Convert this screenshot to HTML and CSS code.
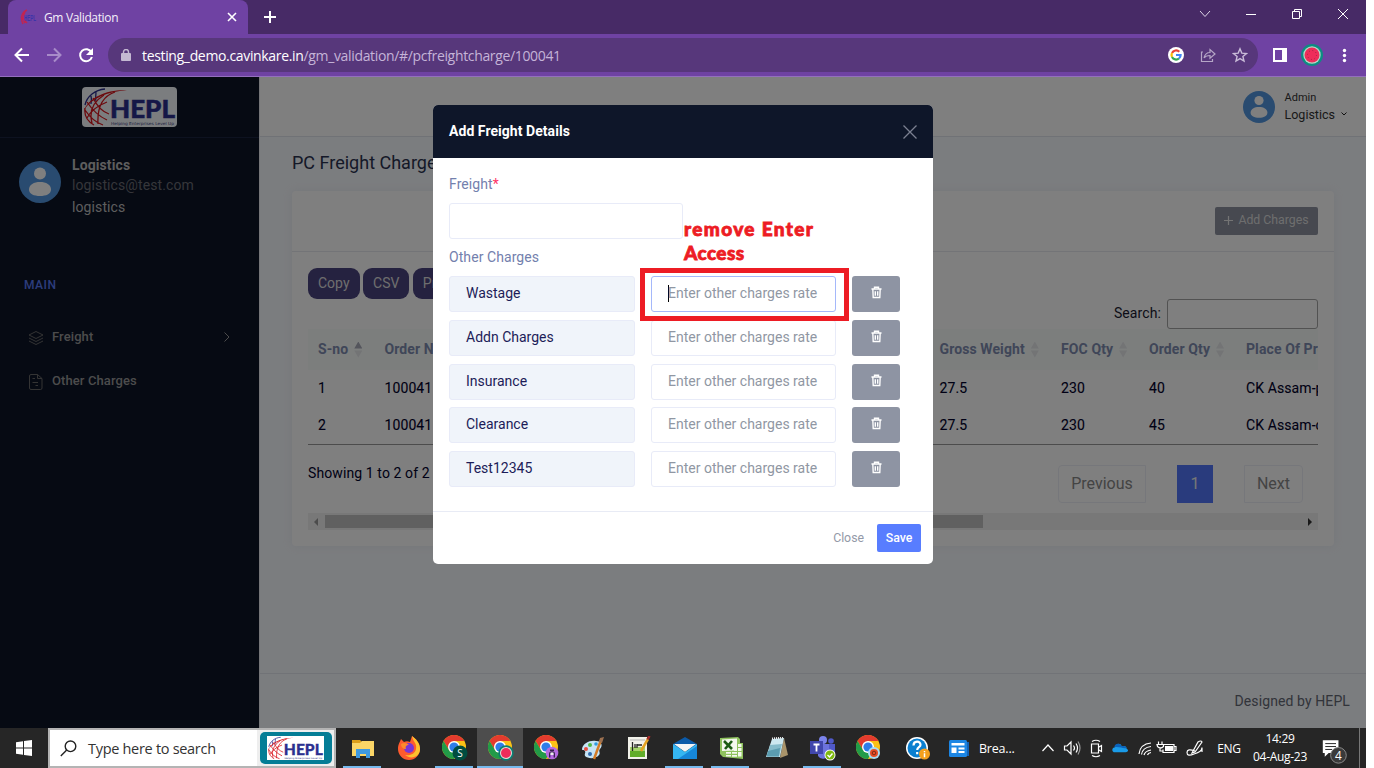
FILE: index.html
```
<!DOCTYPE html>
<html lang="en">
<head>
<meta charset="utf-8">
<title>Gm Validation</title>
<link rel="stylesheet" href="styles.css">
</head>
<body>
<svg class="defs" width="0" height="0">
  <symbol id="globe" viewBox="0 0 46 38">
    <g fill="none" stroke-width="1.300">
      <path stroke="#2b2f8f" d="M2 17C4 8 12 2 22 1M8 8c1 4 0 6 0 8M13 4c0 4-1 7 0 9"/>
      <path stroke="#d8141c" d="M2 20c-1 7 2 13 9 17M32 4C20 8 14 18 15 36M21 7C10 14 6 24 9 35M4 14c4 6 11 14 20 18M10 10c4 8 10 14 16 16M2 22c4 6 9 12 18 15M24 14C14 18 7 24 4 30"/>
      <path fill="#d8141c" stroke="none" d="M44 2C26 2 8 7 1 22 9 10 24 4 44 2z"/>
    </g>
  </symbol>
  <symbol id="avatar" viewBox="0 0 42 42">
    <circle cx="21" cy="21" r="21" fill="#5397e0"/><circle cx="21" cy="12.500" r="6" fill="#fff"/>
    <path fill="#fff" d="M10 28.500c0-5 5-7.500 11-7.500s11 2.500 11 7.500c0 4.500-5 6.500-11 6.500s-11-2-11-6.500z"/>
  </symbol>
  <symbol id="trash" viewBox="0 0 12 14">
    <path fill="none" stroke="#fff" stroke-width="1.500" d="M.5 3.200h11M3.800 3V1.300h4.400V3M2 3.500l.4 9h7.200l.4-9M4.700 5.500v5M7.300 5.500v5"/>
  </symbol>
  <symbol id="chrome" viewBox="0 0 24 24">
    <circle cx="12" cy="12" r="12" fill="#fbc116"/>
    <path fill="#e33b2e" d="M1.600 6A12 12 0 0 1 22.400 6H12L7 15z"/>
    <path fill="#229b48" d="M1.600 6A12 12 0 0 0 12 24l5-9-5 3-5-3z"/>
    <circle cx="12" cy="12" r="6" fill="#fff"/><circle cx="12" cy="12" r="4.600" fill="#2f7de9"/>
  </symbol>
</svg>

<div class="screen">
  <div class="tabstrip">
    <div class="tab">
      <svg class="favicon" width="17" height="16" viewBox="0 0 17 16"><path d="M7 1C2 3 0 9 3 15M5 3c-2 3-2 8 0 11M1 8l6 6" fill="none" stroke="#c2244f" stroke-width="1.500"/><text x="4" y="12" class="fav-text" textLength="12" lengthAdjust="spacingAndGlyphs">HEPL</text></svg>
      <span class="tab-title">Gm Validation</span>
      <svg width="10" height="10" viewBox="0 0 10 10"><path d="M1 1l8 8M9 1L1 9" stroke="#fff" stroke-width="1.600"/></svg>
    </div>
    <svg class="newtab" width="12" height="12" viewBox="0 0 12 12"><path d="M6 0v12M0 6h12" stroke="#fff" stroke-width="2"/></svg>
    <div class="winctl">
      <svg width="46" height="28" viewBox="0 0 46 28"><path d="M18 11l5 5.500 5-5.500" fill="none" stroke="#ddd4e6"/></svg>
      <svg width="46" height="28" viewBox="0 0 46 28"><path d="M18 14.500h10" stroke="#fff"/></svg>
      <svg width="46" height="28" viewBox="0 0 46 28"><path d="M18.500 11.500h7v7h-7zM20.500 11V9.500h7v7H26" fill="none" stroke="#fff"/></svg>
      <svg width="46" height="28" viewBox="0 0 46 28"><path d="M18 9l10 10M28 9L18 19" stroke="#fff"/></svg>
    </div>
  </div>

  <div class="toolbar">
    <svg width="108" height="42" viewBox="0 0 108 42" fill="none" stroke="#fff" stroke-width="2">
      <path d="M29 21H16M22 14.500L15.500 21l6.500 6.500"/>
      <path stroke="#a88bc9" d="M47 21h13M54 14.500l6.500 6.500-6.500 6.500"/>
      <path d="M91.500 18.500a6 6 0 1 0 .4 4.500"/><path fill="#fff" stroke="none" d="M93 14v7h-7z"/>
    </svg>
    <div class="omnibox">
      <svg width="10" height="12" viewBox="0 0 10 12"><path fill="#c4b8d2" d="M1 4h8a1 1 0 0 1 1 1v6a1 1 0 0 1-1 1H1a1 1 0 0 1-1-1V5a1 1 0 0 1 1-1z"/><path d="M2.500 4.500V3a2.500 2.500 0 0 1 5 0v1.500" fill="none" stroke="#c4b8d2" stroke-width="1.400"/></svg>
      <span class="url">testing_demo.cavinkare.in<span>/gm_validation/#/pcfreightcharge/100041</span></span>
      <svg width="16" height="16" viewBox="0 0 16 16"><circle cx="8" cy="8" r="8" fill="#fff"/><g fill="none" stroke-width="2.200"><path stroke="#ea4335" d="M4 6a4.600 4.600 0 0 1 7.300-1.300"/><path stroke="#fbbc05" d="M4 10a4.600 4.600 0 0 1 0-4"/><path stroke="#34a853" d="M4 10a4.600 4.600 0 0 0 7 1.500"/><path stroke="#4285f4" d="M8 8h4.600a4.600 4.600 0 0 1-1.600 3.500"/></g></svg>
      <svg width="16" height="16" viewBox="0 0 16 16" fill="none" stroke="#b5a6c6" stroke-width="1.200"><path d="M3 5H1.500v9.500h11V12M4 11c1-4 3-5.500 6-5.500V2.500L15 7l-5 4.300V8.500C7.500 8.500 5.500 9 4 11z"/></svg>
      <svg width="16" height="16" viewBox="0 0 16 16" fill="none" stroke="#c9bcd8" stroke-width="1.400"><path d="M8 1.800l1.800 4.300 4.700.4-3.600 3 1.100 4.600-4-2.500-4 2.500 1.100-4.600-3.600-3 4.700-.4z"/></svg>
    </div>
    <svg class="bar-icons" width="100" height="42" viewBox="0 0 100 42">
      <path fill="#fff" fill-rule="evenodd" d="M7 14h14v14H7zM9 16v10h7V16z"/>
      <circle cx="46" cy="21" r="11" fill="#0c8d82"/><circle cx="46" cy="21" r="8.700" fill="#b8d8c8"/><circle cx="46" cy="21" r="7.500" fill="#ee2c5a"/><circle cx="46" cy="21" r="4.500" fill="none" stroke="#9c2543" stroke-dasharray="1 2.500"/>
      <g fill="#fff"><circle cx="78.500" cy="16.500" r="1.700"/><circle cx="78.500" cy="21.500" r="1.700"/><circle cx="78.500" cy="26.500" r="1.700"/></g>
    </svg>
  </div>

  <div class="app">
    <aside class="sidebar">
      <div class="brand"><svg class="logo" width="95" height="40" viewBox="0 0 95 40"><use href="#globe" x="1" y="1" width="46" height="38"/><text x="28" y="31" class="logo-name" textLength="65" lengthAdjust="spacingAndGlyphs">HEPL</text><text x="29" y="38" class="logo-tag" textLength="63" lengthAdjust="spacingAndGlyphs">Helping Enterprises Level Up</text></svg></div>
      <div class="profile">
        <svg width="42" height="42"><use href="#avatar"/></svg>
        <div class="who"><b>Logistics</b><span class="mail">logistics@test.com</span><span class="role">logistics</span></div>
      </div>
      <div class="nav-head">MAIN</div>
      <div class="nav">
        <svg width="16" height="16" viewBox="0 0 16 16" fill="none" stroke="#686868"><path d="M8 1.500l7 3.500-7 3.500L1 5zM1 8l7 3.500L15 8M1 11l7 3.500 7-3.500"/></svg>
        <span>Freight</span>
        <svg width="6" height="10" viewBox="0 0 6 10" fill="none" stroke="#999"><path d="M.5.500L5 5 .5 9.500"/></svg>
      </div>
      <div class="nav">
        <svg width="16" height="18" viewBox="0 0 16 18" fill="none" stroke="#686868"><path d="M9.500 1.500H3a1.500 1.500 0 0 0-1.500 1.500v12A1.500 1.500 0 0 0 3 16.500h9.500A1.500 1.500 0 0 0 14 15V5.500zM9.500 1.500v4H14M4.500 9.500H10M4.500 5.500H7M7.500 12.500H10"/></svg>
        <span>Other Charges</span>
      </div>
    </aside>

    <main class="main">
      <header class="topbar">
        <svg width="32" height="32"><use href="#avatar"/></svg>
        <div class="user"><small>Admin</small><span>Logistics <svg width="6" height="4" viewBox="0 0 6 4"><path d="M.5.500L3 3 5.500.500" fill="none" stroke="#222"/></svg></span></div>
      </header>
      <div class="content">
        <h1>PC Freight Charges</h1>
        <section class="card">
          <div class="card-head"><button class="add"><svg width="9" height="9" viewBox="0 0 9 9"><path d="M4.500 0v9M0 4.500h9" stroke="#e8e8e8" stroke-width="1.200"/></svg>Add Charges</button></div>
          <div class="exports"><button>Copy</button><button>CSV</button><button>Print</button></div>
          <div class="search"><label>Search:</label><input aria-label="Search"></div>
          <div class="table">
            <div class="row head"><span>S-no<i class="sort up"></i></span><span>Order No</span><span>Gross Weight<i class="sort"></i></span><span>FOC Qty<i class="sort"></i></span><span>Order Qty<i class="sort"></i></span><span>Place Of Production</span></div>
            <div class="row"><span>1</span><span>100041</span><span>27.5</span><span>230</span><span>40</span><span>CK Assam-p</span></div>
            <div class="row"><span>2</span><span>100041</span><span>27.5</span><span>230</span><span>45</span><span>CK Assam-c</span></div>
          </div>
          <div class="table-foot">
            <span class="info">Showing 1 to 2 of 2</span>
            <div class="pages"><span class="pg prev">Previous</span><span class="pg on">1</span><span class="pg next">Next</span></div>
          </div>
          <div class="scroll"><i class="arrow left"></i><div class="thumb"></div><i class="arrow right"></i></div>
        </section>
      </div>
      <footer class="footer">Designed by HEPL</footer>
    </main>

    <div class="backdrop"></div>
    <div class="modal">
      <div class="modal-head">Add Freight Details<svg width="14" height="14" viewBox="0 0 14 14"><path d="M.5.500l13 13M13.500.500l-13 13" stroke="#7b8091" stroke-width="1.300"/></svg></div>
      <div class="modal-body">
        <label>Freight<em>*</em></label>
        <div class="field freight"></div>
        <label>Other Charges</label>
        <div class="charges">
          <div class="field name">Wastage</div><div class="field rate focus">Enter other charges rate</div><button class="del"><svg width="11" height="13"><use href="#trash"/></svg></button>
          <div class="field name">Addn Charges</div><div class="field rate">Enter other charges rate</div><button class="del"><svg width="11" height="13"><use href="#trash"/></svg></button>
          <div class="field name">Insurance</div><div class="field rate">Enter other charges rate</div><button class="del"><svg width="11" height="13"><use href="#trash"/></svg></button>
          <div class="field name">Clearance</div><div class="field rate">Enter other charges rate</div><button class="del"><svg width="11" height="13"><use href="#trash"/></svg></button>
          <div class="field name">Test12345</div><div class="field rate">Enter other charges rate</div><button class="del"><svg width="11" height="13"><use href="#trash"/></svg></button>
        </div>
      </div>
      <div class="modal-foot"><span>Close</span><button>Save</button></div>
      <div class="note">remove Enter<br><span>Access</span></div>
      <div class="note-box"></div>
    </div>
  </div>

  <div class="taskbar">
    <div class="start"><svg width="16" height="16" viewBox="0 0 16 16" fill="#fff"><path d="M0 2.300l7-1v6.200H0zM8 1.100L16 0v7.500H8zM0 8.500h7v6.200l-7-1zM8 8.500h8V16l-8-1.100z"/></svg></div>
    <div class="tsearch">
      <svg width="17" height="17" viewBox="0 0 17 17" fill="none" stroke="#222" stroke-width="1.400"><circle cx="10.500" cy="6.300" r="5.300"/><path d="M6.700 10L.8 16"/></svg>
      <span>Type here to search</span>
      <div class="chipwrap"><div class="chip"><svg width="57" height="24" viewBox="0 0 95 40"><use href="#globe" x="1" y="1" width="46" height="38"/><text x="28" y="31" class="logo-name" textLength="65" lengthAdjust="spacingAndGlyphs">HEPL</text><text x="29" y="38" class="logo-tag" textLength="63" lengthAdjust="spacingAndGlyphs">Helping Enterprises Level Up</text></svg></div></div>
    </div>
    <div class="task run"><svg width="22" height="19" viewBox="0 0 22 19"><path fill="#dda01b" d="M0 1h8l2 2v4H0z"/><path fill="#fbd667" d="M0 4h8l2-2h12v15H0z"/><path fill="#3f9ae0" d="M4 10h14v9h-4v-4H8v4H4z"/></svg></div>
    <div class="task"><svg width="24" height="24" viewBox="0 0 24 24"><path fill="#ff5b2e" d="M1 13C1 8 3 6 4 3l3 3c2-1 4-1 6 0l2-6c4 3 8 7 8 13a11 11 0 0 1-22 0z"/><path fill="#ffc22e" d="M15 0c1 6 5 7 4 13-1 5-6 7-11 6 6 5 15 2 15-6 0-6-4-10-8-13z"/><circle cx="12" cy="12" r="5" fill="#7b35d4"/><path fill="#ff8a2a" d="M4 8c3-2 6-1 8 1-3 0-4 2-3 4-3 0-5-2-5-5z"/></svg></div>
    <div class="task run"><svg width="26" height="26" viewBox="0 0 26 26"><use href="#chrome" width="24" height="24"/><circle cx="18" cy="18" r="7.500" fill="#004d40"/><text x="18" y="21.500" class="badge-s">S</text></svg></div>
    <div class="task run active"><svg width="26" height="26" viewBox="0 0 26 26"><use href="#chrome" width="24" height="24"/><circle cx="18" cy="18" r="7.700" fill="#0c7d72"/><circle cx="18" cy="18" r="6" fill="#e8e0d8"/><circle cx="18" cy="18" r="5" fill="#ee2c5a"/></svg></div>
    <div class="task"><svg width="26" height="26" viewBox="0 0 26 26"><use href="#chrome" width="24" height="24"/><circle cx="18" cy="18" r="6.300" fill="#b56ae0"/><path d="M15.700 22.500v-3.500a2.300 2 0 0 1 4.600 0v3.500" stroke="#32204a" fill="none" stroke-width="1.300"/><path fill="#32204a" d="M16 14.500h4v1.500h-4z"/><path fill="#eee" d="M16.500 17.500h3V20h-3z"/></svg></div>
    <div class="task"><svg width="24" height="23" viewBox="0 0 24 23"><path fill="#c6e4f5" d="M1 12C2 6 9 3 15 4c6 0 7 5 4 8-2 2 1 4-1 6-3 4-11 4-14 1-1-2 1-3 0-5s-3 0-3-2z"/><circle cx="5" cy="12" r="2" fill="#e84c3d"/><circle cx="9" cy="8" r="2" fill="#52b947"/><circle cx="15" cy="7" r="1.800" fill="#2e9be0"/><circle cx="9" cy="17" r="2" fill="#306cb0"/><path d="M20 3l-7 19" stroke="#d37b25" stroke-width="2.500"/><path fill="#9d7150" d="M19 1l4-1-2 6-3-1z"/></svg></div>
    <div class="task"><svg width="24" height="24" viewBox="0 0 24 24"><path fill="#f2f2ea" d="M1 1h19v22H1z"/><path fill="#61ad29" d="M3 14h15v7H3z"/><path fill="#a6d56b" d="M3 11h15v4H3z"/><path d="M3 4h15" stroke="#b4b4b4"/><path d="M5.500 6v9M8 8v4M10 9h5M10 8v4" stroke="#222" stroke-width="1.300" fill="none"/><path d="M21 3l-7 12" stroke="#e5a321" stroke-width="2.500"/><path d="M22.500 0l-2 3.500" stroke="#a12a2a" stroke-width="2.500"/></svg></div>
    <div class="task run"><svg width="24" height="22" viewBox="0 0 24 22"><path fill="#0b5aa8" d="M0 7l12-7 12 7v5H0z"/><path fill="#f4f4f4" d="M1 7h22l-11 8z"/><path fill="#35b6f2" d="M0 7l12 8L24 7v15H0z"/><path fill="#1687d9" d="M24 9L5 22h19z"/></svg></div>
    <div class="task run"><svg width="24" height="22" viewBox="0 0 24 22"><path fill="#8fc25e" d="M1 1l18-1 2 2v4h3v16l-20-2-3-3z"/><path fill="#f4f8ee" d="M3 2.500l15-1v12L3 14z"/><path d="M5 4l8 8M13 4l-7 8" stroke="#1d5c14" stroke-width="2.600"/><path fill="#f4f8ee" d="M15 7h3v3h-3zM19 7h3.500v3H19zM15 11h3v3h-3zM19 11h3.500v3H19zM19 15h3.500v4.500H19zM13 15h5v1.800h-5zM7 15h5v1.800H7zM7 18h5v1.500H7zM13 18h5v1.800h-5z"/></svg></div>
    <div class="task"><svg width="24" height="22" viewBox="0 0 24 22"><path fill="#a9946b" d="M19 1l4 17-8 3z"/><path fill="#cde8f0" d="M7 2l12-1-4 19H1z"/><path fill="#86bccb" d="M5 8l12-1-3 12.500H2z"/><path fill="#5b9cb0" d="M3 14l12-3-1 8.500H1.500z"/><path d="M7 1.500l12-1" stroke="#eee" stroke-dasharray="1 1" stroke-width="2"/></svg></div>
    <div class="task run"><svg width="26" height="26" viewBox="0 0 26 26"><circle cx="13" cy="5" r="4" fill="#7b83eb"/><circle cx="21" cy="6" r="2.800" fill="#5059c9"/><path fill="#5059c9" d="M16 9h9v7a5 5 0 0 1-7 4z"/><path fill="#6c72dd" d="M8 9h11v9a6 6 0 0 1-11 3z"/><path fill="#4147ad" d="M0 6h13v13H0z"/><path d="M3.500 9.500h6M6.500 9.500v7" stroke="#fff" stroke-width="1.800"/><circle cx="20" cy="20" r="5.500" fill="#fff"/><circle cx="20" cy="20" r="4.600" fill="#7fb910"/><path d="M17.500 20l2 2 3-3.500" fill="none" stroke="#fff" stroke-width="1.400"/></svg></div>
    <div class="task"><svg width="26" height="26" viewBox="0 0 26 26"><use href="#chrome" width="24" height="24"/><circle cx="18" cy="18" r="6" fill="#a9dcf2"/><circle cx="18" cy="18" r="4" fill="#e84d24"/><circle cx="18" cy="18" r="1.800" fill="none" stroke="#7c2d1a"/></svg></div>
    <div class="task help"><svg width="24" height="24" viewBox="0 0 24 24"><circle cx="11" cy="12" r="11" fill="#fff"/><circle cx="11" cy="12" r="9.500" fill="#0a7fd0"/><path d="M7.500 9.500c0-5 7-5 7-.8 0 2.500-3.300 2.500-3.300 5.300M11.200 16v2.200" fill="none" stroke="#fff" stroke-width="2.200"/><circle cx="18.500" cy="18" r="5.500" fill="#f5a01d"/><path d="M18.500 15v1.300M18.500 17.200v4" stroke="#fff" stroke-width="1.500"/></svg></div>
    <div class="news"><svg width="20" height="17" viewBox="0 0 20 17"><path fill="#1261b5" d="M3 2h17v14H3z"/><rect width="18" height="17" rx="1.500" fill="#1c86e4"/><path fill="#fff" d="M2.500 3h13v2.500h-13zM2.500 7.500h5v5.500h-5zM9.500 7.500h6v2h-6zM9.500 11h6v2h-6z"/></svg><span>Brea...</span></div>
    <div class="tray">
      <svg width="176" height="40" viewBox="0 0 176 40" fill="none" stroke="#fff" stroke-width="1.200">
        <path d="M6.500 23l5.500-6 5.500 6"/>
        <path d="M28.500 18h2.500l4-4v12l-4-4h-2.500zM37.500 17.500q2 2.500 0 5M40 15.500q3 4.500 0 9"/><path stroke="#999" d="M42 13.500q4 6.500 0 13"/>
        <path d="M55.500 16h7v9h-7zM63 19l2.500-1.500v6L63 22M56 13.500q4-2.500 8 0M56 27.500q4 2.500 8 0"/>
        <g transform="translate(13.500 3) scale(.82 .85)" stroke="none"><path fill="#1a9be8" d="M80 25c-5 0-4-6 0-6 1-5 7-5 8-1 4-1 6 0 6 3 3 1 2 4-1 4z"/><path fill="#0b62ba" d="M79 19c1-5 7-5 9-1 3-1 5 0 6 2-5 1-8-2-15-1z"/></g>
        <path d="M103 26q1-10 12-11M105.500 26.500q1-7 9.500-8M108 27q1-4 7-5M111.500 27q.5-2 3.500-2.500"/>
        <path d="M127 16.500h11v8h-11v-3M138.500 18.500h1.500v4h-1.500M122.500 13.500v3M126 13.500v3M121 16.500h6.500v2q-3 3-6 0zM124 20v3h3"/><path fill="#fff" stroke="none" d="M129 18h8v5h-8z"/>
        <path d="M156 25l6-11q3-2 4 0l-7 10zM159 23q-8-3-8 1.500t7 1.500q8-2 8-6.500M166 20v4"/>
      </svg>
      <span class="lang">ENG</span>
      <div class="clock"><span>14:29</span><span>04-Aug-23</span></div>
      <svg class="notif" width="46" height="40" viewBox="0 0 46 40"><path fill="#fff" d="M9 12h16v13H15l-4 4v-4H9z"/><path d="M11.500 15.500h11M11.500 18.500h11M11.500 21.500h7" stroke="#262626"/><circle cx="25" cy="27.500" r="8" fill="#3a3a3a" stroke="#8b8b8b"/><text x="25" y="32" class="badge-4">4</text></svg>
    </div>
  </div>
</div>
</body>
</html>
```
FILE: styles.css
```
* { box-sizing: border-box; }
body { margin: 0; background: #fff; font: 14px/21px Roboto, sans-serif; overflow: hidden; }
svg { display: block; flex: none; }
button { border: 0; font: inherit; }
.defs { position: absolute; }
.screen { width: 1366px; height: 768px; display: flex; flex-direction: column; }

.logo-name { font: 900 25px Lato, sans-serif; fill: #2b2f8f; stroke: #2b2f8f; stroke-width: .5px; }
.logo-tag { font: 4px "DejaVu Sans", sans-serif; fill: #35387f; }
.fav-text { font: bold 9px "Liberation Sans", sans-serif; fill: #3c35a8; }

.tabstrip { height: 34px; background: #472a66; display: flex; align-items: flex-start; padding-left: 8px; }
.tab { width: 240px; height: 34px; background: #6f42a3; border-radius: 8px 8px 0 0; display: flex; align-items: center; padding: 0 11px 0 12px; color: #f5f0fa; }
.tab-title { flex: 1; margin-left: 7px; font: 12px "Open Sans", sans-serif; letter-spacing: -.35px; }
.newtab { margin: 11px 0 0 16px; }
.winctl { display: flex; margin-left: auto; }

.toolbar { height: 43px; background: #6f42a3; border-bottom: 1px solid #936fbd; display: flex; }
.omnibox { width: 1150px; height: 34px; margin-top: 4px; border-radius: 17px; background: #57377b; display: flex; align-items: center; padding: 0 10px 0 13px; gap: 16px; }
.bar-icons { margin-left: 8px; }
.url { flex: 1; color: #fff; font: 14px "Open Sans", sans-serif; letter-spacing: -.34px; margin-left: -5px; }
.url span { color: #c5b4d8; }

.app { position: relative; height: 651px; display: flex; background: #f7fafe; overflow: hidden; }
.sidebar { flex: none; width: 259px; background: #0c1427; }
.brand { height: 61px; border-bottom: 1px solid #1a2440; display: flex; justify-content: center; padding-top: 10px; }
.logo { background: #f7fbff; border-radius: 4px; }
.profile { display: flex; padding: 17px 19px 0; gap: 11px; height: 137px; }
.profile > svg { margin-top: 6px; }
.who { display: flex; flex-direction: column; color: #bcbcbc; letter-spacing: .1px; }
.who .mail { color: #6b6d75; margin-top: -1px; }
.who .role { margin-top: 1px; }
.nav-head { color: #5a7bf8; font-weight: 500; font-size: 12px; letter-spacing: .5px; padding-left: 24px; line-height: 20px; }
.nav { display: flex; align-items: center; height: 20px; margin: 32px 29px 0 28px; gap: 8px; color: #999; font-size: 13px; font-weight: 500; letter-spacing: .1px; }
.nav + .nav { margin-top: 24px; }
.nav > svg:first-child { margin-top: 2px; }
.nav span { flex: 1; margin-top: -2px; }

.main { flex: 1; min-width: 0; display: flex; flex-direction: column; border-left: 1px solid #e8ebf1; }
.topbar { height: 60px; background: #fff; border-bottom: 1px solid #e0e4ec; display: flex; align-items: center; justify-content: flex-end; padding-right: 19px; gap: 10px; color: #333; }
.user { display: flex; flex-direction: column; font-size: 12.500px; line-height: 17px; margin-top: -2px; }
.user small { font-size: 11px; }
.user span { display: flex; align-items: center; gap: 6px; }
.content { flex: 1; padding: 15px 32px 0; }
h1 { margin: 0 0 17px; font: 18px/22px Roboto, sans-serif; color: #2a3350; }
.card { height: 355px; background: #fff; border-radius: 4px; box-shadow: 0 0 10px rgba(183,192,206,.2); }
.card-head { height: 61px; border-bottom: 1px solid #e6e8ee; display: flex; justify-content: flex-end; padding: 16px 16px 0; }
.add { width: 103px; height: 28px; background: #8e93a1; color: #ddd; border-radius: 2px; font-size: 12.300px; display: flex; align-items: center; justify-content: center; gap: 5px; padding: 0 0 2px; }
.exports { display: flex; gap: 3.500px; padding: 16px 16px 0; }
.exports button { height: 31px; padding: 0 10px; border-radius: 9px; background: #4b4480; color: #ddd; font-size: 14px; }
.search { display: flex; justify-content: flex-end; align-items: center; padding-right: 16px; gap: 6px; color: #1a1a30; }
.search input { width: 151px; height: 30px; border: 1px solid #a5a5a5; border-radius: 3px; background: #fff; }
.search label { letter-spacing: .1px; margin-top: -2px; }
.table { margin: 0 16px; border-bottom: 1px solid #999; overflow: hidden; color: #00002a; }
.row { display: grid; grid-template-columns: 66.500px 555px 121.500px 88px 97px 160px; padding-left: 10px; height: 37px; align-items: center; white-space: nowrap; letter-spacing: .1px; -webkit-text-stroke: .1px; }
.head { height: 41px; background: #f8fcfb; color: #7f8cb0; font-weight: 700; -webkit-text-stroke: 0; }
.row span { display: flex; align-items: center; }
.sort { width: 8px; height: 16px; margin-left: 6px; background: linear-gradient(#e6e8eb,#e6e8eb); clip-path: polygon(50% 0,100% 43%,0 43%,0 57%,100% 57%,50% 100%,0 57%,0 43%); }
.sort.up { background: linear-gradient(#a8aab8 50%,#e6e8eb 50%); }
.table-foot { display: flex; justify-content: space-between; padding: 18px 31px 0 16px; color: #00002a; }
.info { white-space: nowrap; letter-spacing: .1px; }
.pages { display: flex; margin-top: 2px; font-size: 16px; gap: 31px; }
.pg { height: 38px; border: 1px solid #edeff6; display: flex; align-items: center; justify-content: center; color: #888; padding-bottom: 2px; }
.prev { width: 88px; border-radius: 4px 0 0 4px; }
.on { width: 36px; background: #5377fa; border: 0; color: #eee; }
.next { width: 59px; border-radius: 0 4px 4px 0; }
.scroll { height: 17px; margin: 10px 16px 0; background: #f1f1f1; display: flex; align-items: center; padding-right: 6px; }
.thumb { width: 658px; height: 13px; margin: 0 auto 0 4px; background: #c1c1c1; }
.arrow { border: 4px solid transparent; }
.arrow.left { border-right-color: #999; margin-left: 6px; border-left: 0; border-right-width: 4px; margin-right: 3px; }
.arrow.right { border-left-color: #333; border-right: 0; border-left-width: 4px; }
.footer { height: 55px; border-top: 1px solid #e3e6ee; display: flex; align-items: center; justify-content: flex-end; padding-right: 16px; color: #646875; letter-spacing: .1px; }

.backdrop { position: absolute; inset: 0; background: rgba(0,0,0,.5); }
.modal { position: absolute; left: 433px; top: 28px; width: 500px; height: 459px; background: #fff; border-radius: 5px; }
.modal-head { height: 53px; background: #0e1629; color: #fff; border-radius: 5px 5px 0 0; display: flex; align-items: center; justify-content: space-between; padding: 0 16px; font-weight: 700; letter-spacing: .05px; }
.modal-body { height: 353px; padding: 16px; }
.modal-body label { display: block; color: #7380ad; margin-bottom: 8px; letter-spacing: .07px; }
.modal-body em { color: #ff3366; font-style: normal; }
.field { height: 36px; border: 1px solid #e8ebf8; border-radius: 3px; display: flex; align-items: center; padding-left: 16px; white-space: nowrap; }
.freight { width: 234px; margin-bottom: 8px; }
.charges { display: grid; grid-template-columns: 186px 185px 48px; column-gap: 16px; row-gap: 7.800px; }
.name { background: #f0f4fa; color: #1c1c58; padding-bottom: 1px; }
.rate { color: #9097a3; padding-bottom: 1px; }
.focus { border-color: #a5b8fa; }
.focus::before { content: ""; width: 1px; height: 17px; margin-right: -1px; background: #000; }
.del { background: #8e94a3; border-radius: 3px; display: flex; align-items: center; justify-content: center; padding: 0 0 3px; }
.modal-foot { height: 53px; border-top: 1px solid #e8ebf5; display: flex; align-items: center; justify-content: flex-end; gap: 13px; padding-right: 12px; color: #9399a8; font-size: 12.300px; }
.modal-foot button { width: 44px; height: 28px; padding: 0; border-radius: 2px; background: #587dff; color: #fff; font-weight: 500; }
.note { position: absolute; left: 251px; top: 112px; font: 900 19px/24px Lato, sans-serif; color: #ed1c24; white-space: nowrap; letter-spacing: 1.350px; -webkit-text-stroke: .8px #ed1c24; }
.note span { letter-spacing: .4px; }
.note-box { position: absolute; left: 207px; top: 163px; width: 209px; height: 53px; border: 5px solid #ed1c24; }

.taskbar { height: 40px; background: #262626; display: flex; color: #fff; font-family: "Open Sans", sans-serif; }
.start { width: 48px; display: flex; align-items: center; justify-content: center; }
.tsearch { width: 288px; margin-right: 3px; border: 2px solid #b4b4b4; background: #fff; display: flex; align-items: center; padding-left: 10px; color: #333; font-size: 14.500px; }
.tsearch > span { margin-left: 11px; white-space: nowrap; letter-spacing: -.3px; }
.chipwrap { margin-left: auto; width: 77px; height: 36px; background: #eee; display: flex; align-items: center; justify-content: center; }
.chip { width: 72px; height: 32px; border-radius: 5px; background: #047d96; display: flex; align-items: center; justify-content: center; }
.chip svg { background: #fff; }
.task { width: 46px; display: flex; align-items: center; justify-content: center; padding-left: 1px; background: linear-gradient(#76b9ed,#76b9ed) no-repeat 4px 38px / 0 2px; }
.task.run { background-size: 38px 2px; }
.task.active { background-color: #4d4d4d; background-position: 0 38px; background-size: 46px 2px; }
.help { width: 52px; }
.news { display: flex; align-items: center; width: 93px; gap: 10px; padding-left: 6px; font-size: 12.500px; letter-spacing: -.2px; }
.tray { display: flex; align-items: center; }
.lang { width: 34px; text-align: center; font-size: 12px; letter-spacing: -.3px; }
.clock { width: 68px; display: flex; flex-direction: column; align-items: center; font-size: 12px; line-height: 18px; letter-spacing: -.3px; }
.notif { width: 46px; height: 40px; border-right: 1px solid #777; }
.badge-s { font: 10px "Open Sans", sans-serif; fill: #fff; text-anchor: middle; }
.badge-4 { font: 12px "Open Sans", sans-serif; fill: #fff; text-anchor: middle; }
```
